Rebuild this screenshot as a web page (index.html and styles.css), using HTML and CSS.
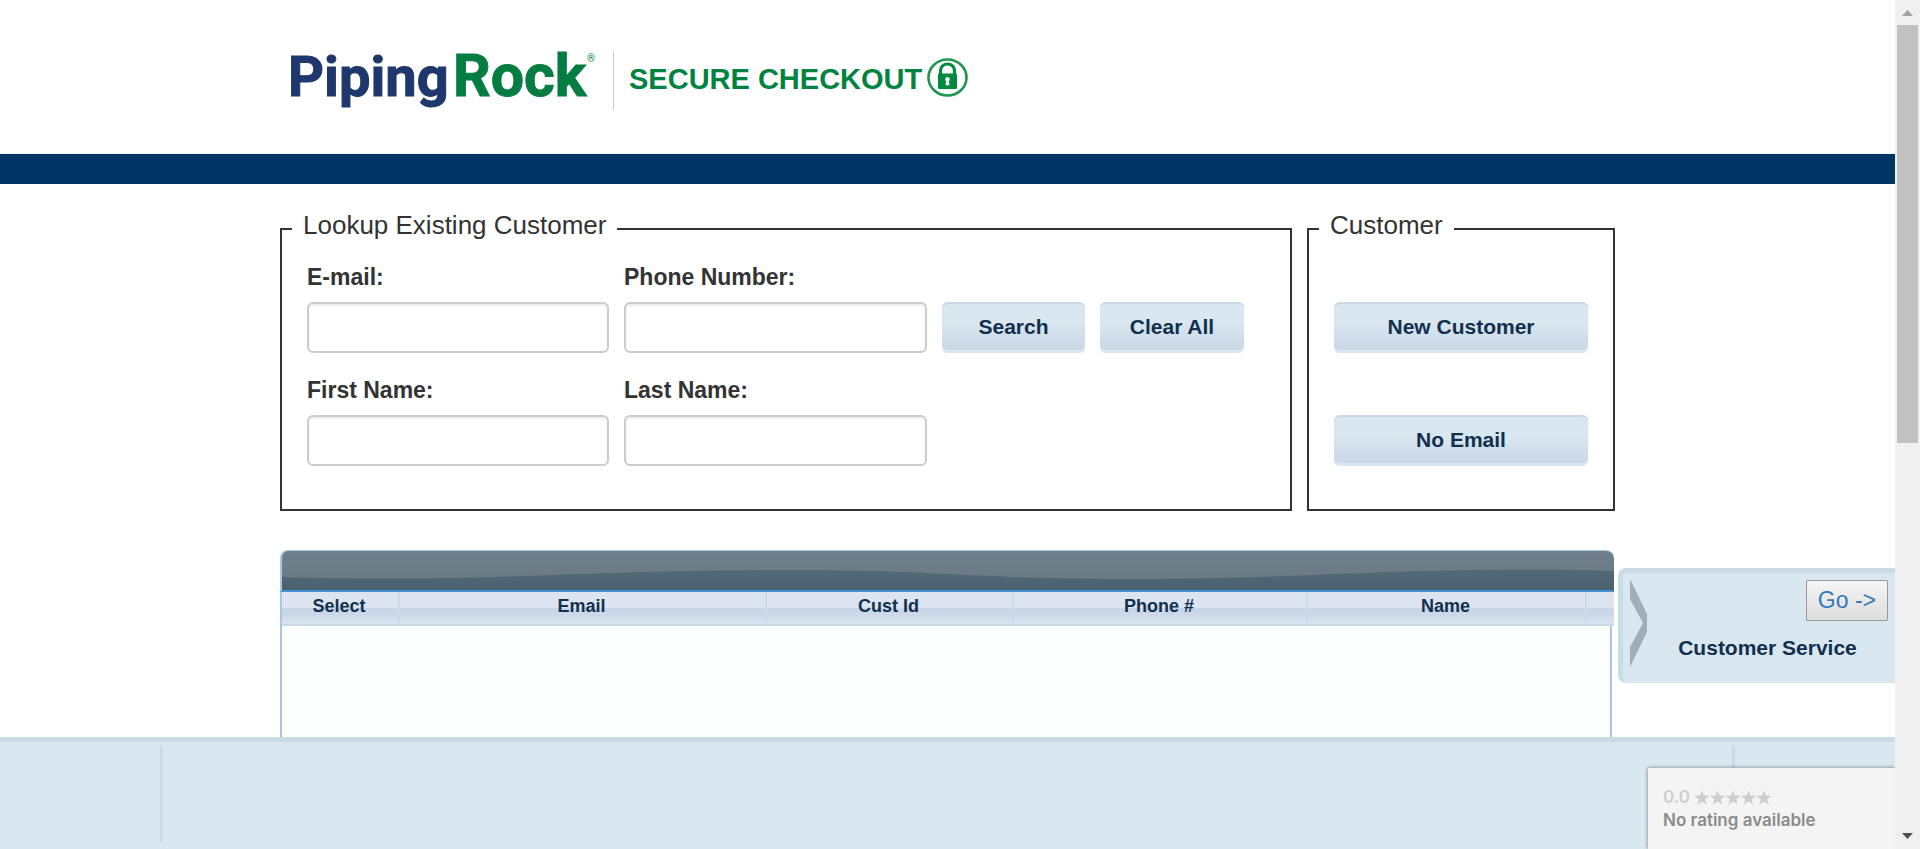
FILE: index.html
```html
<!DOCTYPE html>
<html lang="en">
<head>
<meta charset="utf-8">
<title>Secure Checkout</title>
<link rel="stylesheet" href="styles.css">
</head>
<body>
<div class="page">
  <header class="header">
    <div class="wrap header-row">
      <svg class="logo" viewBox="0 0 310 59" role="img" aria-label="PipingRock">
        <text class="logo-a" x="-3" y="45">Piping</text>
        <text class="logo-b" x="162" y="45">Rock</text>
        <text class="logo-r" x="296" y="11">®</text>
      </svg>
      <div class="secure">
        <h1 class="secure-title">SECURE CHECKOUT</h1>
        <svg class="lock" viewBox="0 0 41 39" aria-hidden="true">
          <ellipse cx="20.500" cy="19.500" rx="19" ry="18" fill="#fff" stroke="#1f9650" stroke-width="2.600"/>
          <path d="M13.500 17v-4.500a7 6.500 0 0 1 14 0V17" fill="none" stroke="#008a3e" stroke-width="3.200"/>
          <rect x="11" y="15.500" width="19" height="15.500" rx="1.500" fill="#008a3e"/>
          <path d="M20.500 19a2.300 2.300 0 0 1 1.300 4.200l.8 4h-4.200l.8-4a2.300 2.300 0 0 1 1.300-4.200z" fill="#fff"/>
        </svg>
      </div>
    </div>
  </header>
  <div class="bar"></div>
  <main class="main">
    <form class="wrap forms">
      <fieldset class="box lookup">
        <legend>Lookup Existing Customer</legend>
        <div class="lookup-grid">
          <div class="field"><label for="email">E-mail:</label><input id="email" type="text"></div>
          <div class="field"><label for="phone">Phone Number:</label><input id="phone" type="text"></div>
          <button class="btn" type="button">Search</button>
          <button class="btn" type="button">Clear All</button>
          <div class="field"><label for="first">First Name:</label><input id="first" type="text"></div>
          <div class="field"><label for="last">Last Name:</label><input id="last" type="text"></div>
        </div>
      </fieldset>
      <fieldset class="box customer">
        <legend>Customer</legend>
        <div class="customer-stack">
          <button class="btn" type="button">New Customer</button>
          <button class="btn" type="button">No Email</button>
        </div>
      </fieldset>
    </form>
    <section class="wrap results">
      <div class="results-top">
        <svg class="wave" viewBox="0 0 1332 39" preserveAspectRatio="none" aria-hidden="true">
          <defs><linearGradient id="deep" x1="0" y1="0" x2="0" y2="1"><stop offset="0" stop-color="#546a79"/><stop offset="1" stop-color="#4a606d"/></linearGradient></defs>
          <path d="M0 26C40 27 60 27.500 100 27.500C250 27.500 330 19 510 19C660 19 690 28 848 28C1010 28 1090 18.500 1251 18.500C1285 18.500 1310 19 1332 20V39H0Z" fill="url(#deep)"/>
        </svg>
      </div>
      <table class="grid">
        <colgroup><col class="c1"><col class="c2"><col class="c3"><col class="c4"><col class="c5"><col class="c6"></colgroup>
        <thead><tr><th>Select</th><th>Email</th><th>Cust Id</th><th>Phone #</th><th>Name</th><th></th></tr></thead>
      </table>
      <div class="grid-body"></div>
    </section>
    <aside class="service">
      <svg class="chevron" viewBox="0 0 17 88" aria-hidden="true"><path d="M0 0L17 35V53L0 88V68L13 44L0 20Z" fill="#a3adb5"/></svg>
      <div class="service-content">
        <a class="go" href="#">Go -&gt;</a>
        <strong class="service-label">Customer Service</strong>
      </div>
    </aside>
  </main>
  <footer class="footer">
    <div class="footer-inner"></div>
    <div class="rating">
      <div class="rating-row">
        <span>0.0</span>
        <svg class="stars" viewBox="0 0 78 15" aria-hidden="true">
          <defs><path id="star" d="M8 .2L10 5.450L15.600 5.700L11.200 9.250L12.700 14.700L8 11.600L3.300 14.700L4.800 9.250L.4 5.700L6 5.450Z"/></defs>
          <g fill="#cecece"><use href="#star"/><use href="#star" x="15.500"/><use href="#star" x="31"/><use href="#star" x="46.500"/><use href="#star" x="62"/></g>
        </svg>
      </div>
      <div class="rating-text">No rating available</div>
    </div>
  </footer>
</div>
<div class="scroll" aria-hidden="true">
  <svg class="scroll-arrow" viewBox="0 0 25 25"><path d="M7 16L12.500 10L18 16Z" fill="#a0a0a0"/></svg>
  <div class="scroll-track"><div class="scroll-thumb"></div></div>
  <svg class="scroll-arrow" viewBox="0 0 25 25"><path d="M7 9L12.500 15L18 9Z" fill="#505050"/></svg>
</div>
</body>
</html>
```
FILE: styles.css
```css
* { box-sizing: border-box; }

body {
  margin: 0;
  height: 100vh;
  display: flex;
  overflow: hidden;
  background: #fff;
  color: #333;
  font-family: "Liberation Sans", Arial, sans-serif;
}

.page {
  flex: 1;
  min-width: 0;
  display: flex;
  flex-direction: column;
}

.wrap {
  width: 100%;
  max-width: 1335px;
  margin: 0 auto;
}

/* Header */
.header { padding: 51px 0 44px; }
.header-row { display: flex; padding-left: 11px; }
.logo { width: 310px; height: 59px; overflow: visible; }
.logo text { font-family: Roboto, sans-serif; font-weight: 700; font-size: 56px; }
.logo .logo-a { fill: #1e376c; stroke: #1e376c; stroke-width: 1; }
.logo .logo-b { fill: #057d42; stroke: #057d42; stroke-width: 1; font-size: 59px; }
.logo .logo-r { fill: #057d42; font-size: 10px; font-weight: 400; }
.secure {
  display: flex;
  align-items: flex-start;
  gap: 5px;
  margin-left: 12px;
  padding: 7px 0 0 15px;
  border-left: 1px solid #ccc;
}
.secure-title {
  margin: 0;
  padding-top: 4px;
  color: #008240;
  font-size: 29px;
  line-height: 34px;
}
.lock { width: 41px; height: 39px; }
.bar { height: 30px; background: #036; }

/* Lookup forms */
.main {
  position: relative;
  flex: 1;
  min-height: 0;
  display: flex;
  flex-direction: column;
  padding-top: 26px;
  overflow: hidden;
}
.forms { display: flex; gap: 15px; margin-bottom: 39px; }
.box {
  min-width: 0;
  margin: 0;
  padding: 14px 25px 43px;
  border: 2px solid #333;
}
.lookup { flex: 1; }
.customer { width: 308px; }
.box legend {
  margin-left: -15px;
  padding: 0 11px 8px;
  font-size: 26px;
  line-height: 30px;
}
.lookup-grid {
  display: grid;
  grid-template-columns: 302px 303px 143px 144px;
  gap: 22px 15px;
  align-items: end;
}
.field { display: flex; flex-direction: column; gap: 10px; }
.field label { font-size: 23px; font-weight: 700; line-height: 30px; }
.field input {
  width: 100%;
  height: 51px;
  padding: 8px 12px;
  border: 2px solid #ccc;
  border-radius: 6px;
  background: #fff;
  box-shadow: inset 0 2px 2px #eee;
  font: inherit;
  font-size: 23px;
}
.btn {
  width: 100%;
  height: 51px;
  padding: 0 0 2px;
  border: 0;
  border-radius: 6px;
  background: linear-gradient(#d9e7f0 0%, #d9e7f0 40%, #c8d6e7 96%);
  box-shadow: inset 0 2px #c8d8e8, inset 0 -3px #d9e7f0;
  color: #12304e;
  font: inherit;
  font-size: 21px;
  font-weight: 700;
}
.customer-stack { display: flex; flex-direction: column; gap: 62px; padding-top: 40px; }

/* Results */
.results {
  flex: 1;
  min-height: 0;
  display: flex;
  flex-direction: column;
  padding-right: 1px;
}
.results-top {
  height: 42px;
  border: 1px solid #a6c8e0;
  border-width: 1px 0 2px 2px;
  border-bottom-color: #428fd3;
  border-radius: 8px 8px 0 0;
  background: linear-gradient(#6f808c, #687983);
  overflow: hidden;
}
.wave { display: block; width: 100%; height: 39px; }
.grid {
  width: 100%;
  table-layout: fixed;
  border-collapse: separate;
  border-spacing: 0;
  border-left: 2px solid #a6c8e0;
}
.grid thead th {
  height: 34px;
  padding: 0 2px 4px 0;
  border-right: 2px solid #c9dbe7;
  border-bottom: 2px solid #c9dbe7;
  background: linear-gradient(#dbe4f0 0%, #dbe4f0 50%, #c8d6e7 51%, #c8d6e7 62%, #dbe4f0 100%);
  color: #12304e;
  font-size: 18px;
  line-height: 22px;
}
.grid thead th:last-child { border-right: 0; }
.c1 { width: 118px; }
.c2 { width: 367px; }
.c3 { width: 247px; }
.c4 { width: 294px; }
.c6 { width: 27px; }
.grid-body {
  flex: 1;
  margin-right: 2px;
  border: solid #a6c8e0;
  border-width: 0 2px;
  background: #fcfffe;
}

/* Customer service tab */
.service {
  position: absolute;
  top: 384px;
  right: 0;
  display: flex;
  width: 277px;
  height: 115px;
  padding: 6px 7px 0;
  border: solid #c9dbe4;
  border-width: 5px 0 0 5px;
  border-radius: 8px 0 0 8px;
  background: #d9e7f0;
}
.chevron { width: 17px; height: 88px; }
.service-content { flex: 1; display: flex; flex-direction: column; align-items: flex-end; }
.go {
  display: block;
  margin-top: 1px;
  padding: 0 11px;
  border: 1px solid #999;
  border-radius: 1px;
  background: linear-gradient(#f5f5f5, #ddd);
  color: #337ab7;
  font-size: 23px;
  line-height: 39px;
  text-decoration: none;
}
.service-label {
  width: 100%;
  margin-top: 14px;
  color: #12304e;
  font-size: 21px;
  line-height: 26px;
  text-align: center;
}

/* Footer */
.footer {
  position: relative;
  height: 112px;
  padding: 4px 160px 7px;
  border-top: 5px solid #c9dbe4;
  background: #d9e7f0;
}
.footer-inner { height: 96px; border: solid #c9dbe4; border-width: 0 3px; }
.rating {
  position: absolute;
  right: 0;
  bottom: 0;
  width: 247px;
  height: 81px;
  padding: 18px 15px;
  background: #f4f4f4;
  box-shadow: 0 0 4px #777;
  clip-path: inset(-4px 0 0 -4px);
  font-family: Inter, sans-serif;
  font-size: 17px;
  font-weight: 600;
}
.rating-row { display: flex; align-items: center; gap: 4px; color: #cecece; line-height: 22px; }
.stars { width: 78px; height: 15px; }
.rating-text { color: #8b8b8b; line-height: 24px; }

/* Scrollbar */
.scroll { width: 25px; display: flex; flex-direction: column; background: #f0f0f0; }
.scroll-arrow { width: 25px; height: 25px; }
.scroll-track { flex: 1; padding: 0 2px; }
.scroll-thumb { height: 52.3%; background: #c1c1c1; }
```
